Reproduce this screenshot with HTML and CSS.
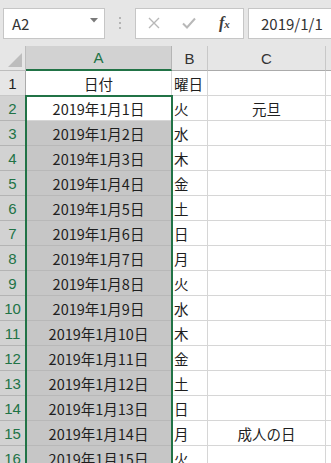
FILE: index.html
```html
<!DOCTYPE html>
<html lang="ja">
<head>
	<meta charset="UTF-8">
	<title>日付</title>
	<link rel="stylesheet" href="styles.css">
</head>
<body>
	<div class="formula-bar">
		<div class="name-box">
			<span>A2</span>
			<svg class="caret" width="8" height="5" viewBox="0 0 8 5"><path d="M0 0h8L4 4.5z" fill="#7a7a7a"/></svg>
		</div>
		<svg class="grip" width="4" height="14" viewBox="0 0 4 14">
			<rect x="1" y="1" width="2" height="2" fill="#b4b4b4"/>
			<rect x="1" y="6" width="2" height="2" fill="#b4b4b4"/>
			<rect x="1" y="11" width="2" height="2" fill="#b4b4b4"/>
		</svg>
		<div class="fx-box">
			<svg width="12" height="12" viewBox="0 0 12 12"><path d="M1 1l10 10M11 1L1 11" stroke="#b8b8b8" stroke-width="1.4"/></svg>
			<svg width="14" height="12" viewBox="0 0 14 12"><path d="M1 6.5l4 4L13 1.5" stroke="#b8b8b8" stroke-width="2" fill="none"/></svg>
			<span class="fx"><i>f</i><span>x</span></span>
		</div>
		<div class="input-box">2019/1/1</div>
	</div>

	<div class="sheet">
		<div class="grid">
			<div class="corner"><svg width="14" height="14" viewBox="0 0 14 14"><path d="M14 0v14H0z" fill="#bdbdbd"/></svg></div>
			<div class="col-head on">A</div>
			<div class="col-head">B</div>
			<div class="col-head">C</div>
			<div class="col-head"></div>

			<div class="row-head">1</div>
			<div class="cell center">日付</div>
			<div class="cell">曜日</div>
			<div class="cell"></div>
			<div class="cell"></div>
		</div>
		<div class="selection"></div>
	</div>

	<script>
		var days = ['火', '水', '木', '金', '土', '日', '月'];
		var notes = { 1: '元旦', 14: '成人の日' };
		var grid = document.querySelector('.grid');

		for (var d = 1; d <= 15; d++) {
			var html = '<div class="row-head on">' + (d + 1) + '</div>';
			html += '<div class="cell center' + (d > 1 ? ' picked' : '') + '">2019年1月' + d + '日</div>';
			html += '<div class="cell">' + days[(d - 1) % 7] + '</div>';
			html += '<div class="cell center">' + (notes[d] || '') + '</div>';
			html += '<div class="cell"></div>';
			grid.insertAdjacentHTML('beforeend', html);
		}
	</script>
</body>
</html>
```

FILE: styles.css
```css
html,
body {
	margin: 0;
	padding: 0;
}

body {
	background: #e6e6e6;
	font-family: "Noto Sans CJK JP", "Noto Sans", sans-serif;
	font-size: 14px;
	color: #222;
	overflow: hidden;
}

.formula-bar {
	display: flex;
	align-items: center;
	height: 46px;
	padding-left: 3px;
	box-sizing: border-box;
}

.formula-bar > * {
	flex-shrink: 0;
}

.name-box {
	display: flex;
	align-items: center;
	justify-content: space-between;
	width: 102px;
	height: 31px;
	box-sizing: border-box;
	padding: 0 6px 0 8px;
	background: #fff;
	border: 1px solid #c6c6c6;
	font-size: 15px;
	color: #333;
}

.name-box .caret {
	margin-top: -6px;
}

.grip {
	margin: 0 13px 0 13px;
}

.fx-box {
	display: flex;
	align-items: center;
	width: 109px;
	height: 31px;
	box-sizing: border-box;
	padding-left: 12px;
	background: #fff;
	border: 1px solid #c6c6c6;
}

.fx-box svg + svg {
	margin-left: 22px;
}

.fx {
	margin-left: 23px;
	font-family: "Liberation Serif", serif;
	font-size: 16px;
	font-weight: bold;
	color: #3c3c3c;
}

.fx span {
	font-size: 11px;
	font-style: italic;
}

.input-box {
	width: 100px;
	height: 31px;
	box-sizing: border-box;
	margin-left: 4px;
	padding-left: 12px;
	line-height: 29px;
	background: #fff;
	border: 1px solid #c6c6c6;
	border-right: none;
	font-size: 15px;
	color: #333;
}

.sheet {
	position: relative;
	background: #fff;
}

.grid {
	display: grid;
	grid-template-columns: 26px 146px 36px 118px 40px;
	grid-auto-rows: 25px;
}

.grid > div {
	box-sizing: border-box;
	border-right: 1px solid #d6d6d6;
	border-bottom: 1px solid #d6d6d6;
	white-space: nowrap;
	overflow: hidden;
	display: flex;
	align-items: center;
}

.corner,
.col-head,
.row-head {
	background: #e6e6e6;
}

.grid > .corner {
	align-items: flex-end;
	justify-content: flex-end;
	padding: 0 3px 3px 0;
	border-color: #bdbdbd;
}

.grid > .col-head {
	justify-content: center;
	font-family: "Liberation Sans", sans-serif;
	font-size: 15px;
	color: #333;
	border-right-color: #c8c8c8;
	border-bottom-color: #ababab;
}

.grid > .col-head.on {
	background: #d2d2d2;
	color: #217346;
	border-bottom: 2px solid #217346;
	border-right-color: #b4b4b4;
}

.grid > .row-head {
	justify-content: center;
	font-family: "Liberation Sans", sans-serif;
	font-size: 15px;
	color: #222;
	border-right-color: #ababab;
	border-bottom-color: #c8c8c8;
}

.grid > .row-head.on {
	background: #d2d2d2;
	color: #217346;
	border-bottom-color: #b4b4b4;
}

.cell {
	padding-left: 2px;
	font-size: 14.5px;
	color: #1e1e1e;
}

.grid > .center {
	justify-content: center;
	padding-left: 0;
}

.picked {
	background: #c6c6c6;
}

.grid > .picked {
	border-bottom-color: #b8b8b8;
}

.selection {
	position: absolute;
	left: 25px;
	top: 49px;
	width: 148px;
	height: 400px;
	box-sizing: border-box;
	border: 2px solid #217346;
	pointer-events: none;
}
```
